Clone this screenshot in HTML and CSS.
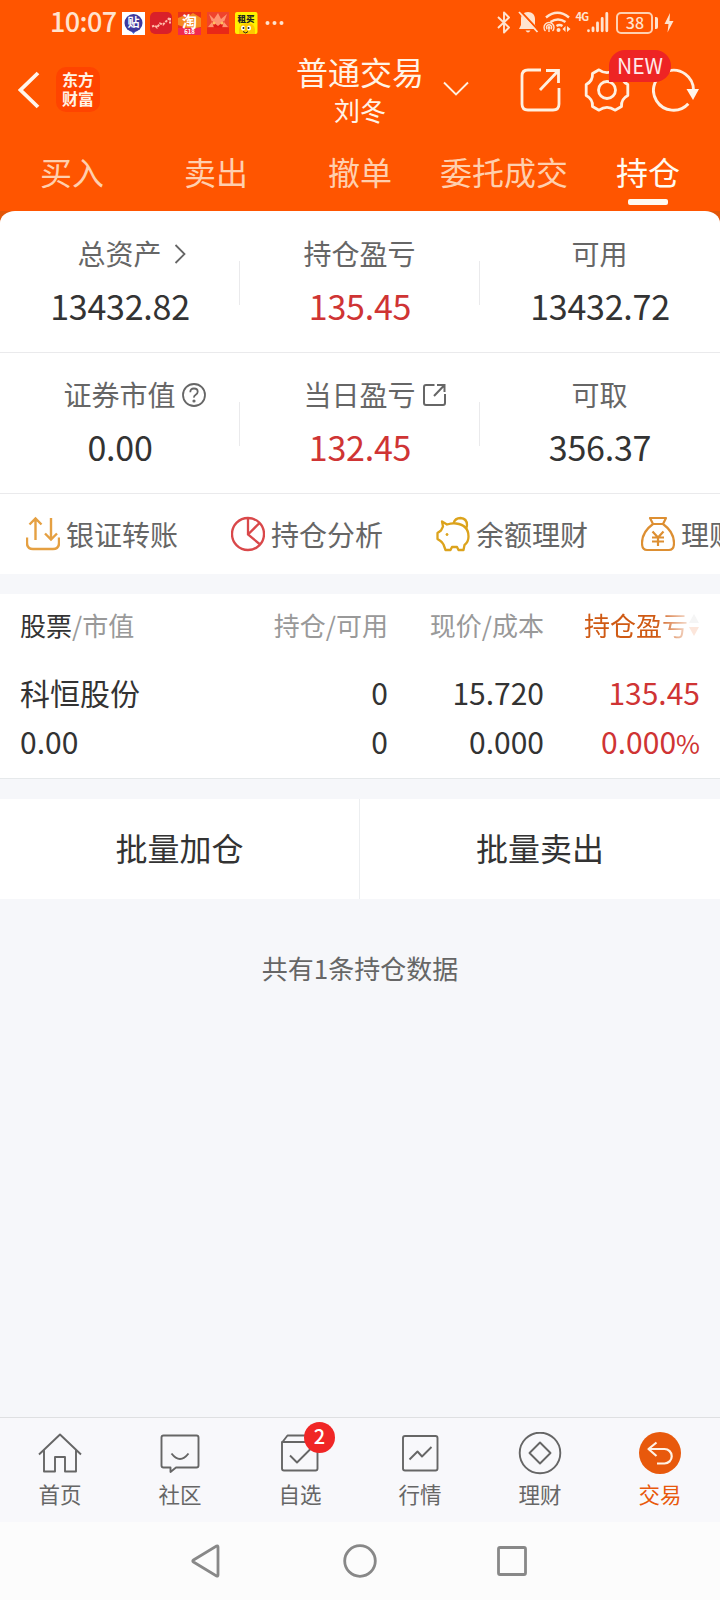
FILE: index.html
```html
<!DOCTYPE html>
<html lang="zh-CN">
<head>
<meta charset="utf-8">
<title>普通交易</title>
<link rel="stylesheet" href="styles.css">
</head>
<body>
<div class="app">
  <header class="header">
    <div class="status">
      <span class="time">10:07</span>
      <div class="notif">
        <svg width="23" height="23" viewBox="0 0 23 23"><rect width="23" height="23" fill="#fff"/><path d="M9 19l2.500 3 2.500-3z" fill="#3a62d8"/><circle cx="11.500" cy="11" r="9" fill="#3e3a9e"/><text x="11.500" y="15.300" font-size="12" font-weight="700" text-anchor="middle" fill="#fff">贴</text></svg>
        <svg width="23" height="23" viewBox="0 0 23 23"><rect width="22" height="22" rx="5" fill="#d9202a"/><path d="M2 14.500l3-1 2 2 3-4 3 1 3-3 4-4v6" fill="none" stroke="#ffb9a8" stroke-width="2" stroke-dasharray="2.500 1"/></svg>
        <svg width="23" height="23" viewBox="0 0 23 23"><rect width="23" height="23" fill="#e8321c"/><path d="M0 6l5-2 3 2 7-5 8 5v9L12 17 0 13z" fill="#f58a22"/><rect y="16" width="23" height="7" fill="#f02a50"/><text x="11.500" y="14.500" font-size="15" font-weight="700" text-anchor="middle" fill="#fff">淘</text><text x="11.500" y="21.800" font-size="6" font-weight="700" text-anchor="middle" fill="#fff">618</text></svg>
        <svg width="23" height="23" viewBox="0 0 23 23"><rect width="22" height="22" fill="#f0442c"/><path d="M2 2l5 5 4-6 3 6 6-5-3 8 4 5H1l4-5z" fill="#ff9470"/><path d="M5 9l6 5 6-5-2 7H7z" fill="#e01c18"/><circle cx="7" cy="11" r="1.500" fill="#ffc060"/><circle cx="15" cy="11" r="1.500" fill="#ffc060"/><rect y="15.500" width="22" height="6.500" fill="#e82818"/></svg>
        <svg width="23" height="23" viewBox="0 0 23 23"><rect width="22.500" height="22" rx="2" fill="#fff200"/><text x="11" y="10" font-size="8.500" font-weight="900" text-anchor="middle" fill="#222">租买</text><path d="M4 22v-5q1-6 8-6t8 6v5z" fill="#ffc800"/><ellipse cx="8" cy="16" rx="2" ry="2.500" fill="#fff"/><ellipse cx="14" cy="16" rx="2" ry="2.500" fill="#fff"/><circle cx="8.500" cy="16" r="1" fill="#222"/><circle cx="13.500" cy="16" r="1" fill="#222"/><path d="M8 19.500q3 3 5 0" stroke="#222" fill="none"/></svg>
        <svg class="more" width="19" height="23" viewBox="0 0 19 23" fill="#ffe3cf"><circle cx="2.500" cy="11" r="2"/><circle cx="9.500" cy="11" r="2"/><circle cx="16.500" cy="11" r="2"/></svg>
      </div>
      <div class="sys">
        <svg class="bt" width="14" height="23" viewBox="0 0 14 23" fill="none" stroke="#ffe3cf" stroke-width="1.900" stroke-linejoin="round"><path d="M1 6l11 10.500-5 5V1.500l5 5L1 17"/></svg>
        <svg class="bell" width="22" height="23" viewBox="0 0 22 23"><path d="M10 1c-4.500 0-7 3-7 7v6l-2 4h18l-2-4V8c0-4-2.500-7-7-7z" fill="#ffe3cf"/><path d="M7.500 19.500h5q-2.500 4-5 0z" fill="#ffe3cf"/><path d="M2.500 0L21 20" stroke="#ff5500" stroke-width="2"/><path d="M1 1l18.500 20" stroke="#ffe3cf" stroke-width="1.800"/></svg>
        <svg class="wifi" width="28" height="23" viewBox="0 0 28 23" fill="none" stroke="#ffe3cf" stroke-width="2.500"><path d="M3 6.500q11.500-9.500 23 0M7.500 11q7.500-5 15 0M13.500 15q3-1.800 6 0"/><g stroke-width="1.400"><path d="M2.500 20a5 5 0 1 1 7 0M4.300 18.300a2.600 2.600 0 1 1 3.500 0"/><circle cx="6" cy="16.500" r=".8"/><path d="M6 18v3"/></g><circle cx="15.500" cy="19" r="1" stroke-width="2"/><path d="M22.500 15l-3 3 3 3zM24 15l3.500 3-3.500 3z" fill="#ffe3cf" stroke="none"/></svg>
        <span class="net">4G</span>
        <svg class="signal" width="22" height="23" viewBox="0 0 22 23" stroke="#ffe3cf" stroke-width="2.800" stroke-linecap="round"><path d="M1.500 19.700v.1M6 17v2.800M10.500 12v7.800M15.200 7.500v12.300M19.800 2.500v17.300"/></svg>
        <span class="battery">38</span><i class="nub"></i>
        <svg class="bolt" width="10" height="20" viewBox="0 0 10 20"><path d="M6 0L.5 11H4.500L3.500 19.500 9.500 8H5.500z" fill="#ffe3cf"/></svg>
      </div>
    </div>
    <div class="titlebar">
      <div class="left">
        <svg width="22" height="38" viewBox="0 0 22 38" fill="none" stroke="#fff6ec" stroke-width="3.800"><path d="M20 2L2.500 19 20 36"/></svg>
        <div class="logo">东方<br>财富</div>
      </div>
      <div class="title"><div class="name">普通交易</div><div class="user">刘冬</div></div>
      <div class="tools">
        <svg class="chev" width="26" height="16" viewBox="0 0 26 16" fill="none" stroke="#fff0e0" stroke-width="1.900"><path d="M1 1.500l12 12 12-12"/></svg>
        <svg class="export" width="42" height="44" viewBox="0 0 42 44" fill="none" stroke="#fff0e0" stroke-width="2.800"><path d="M21 2H8Q2 2 2 8v28q0 6 6 6h25q6 0 6-6V20M26 2.500h12.500V15M38.500 2.500L20 22"/></svg>
        <div class="gearwrap">
          <svg width="46" height="46" viewBox="0 0 46 46" fill="none" stroke="#fff0e0" stroke-width="2.800" stroke-linejoin="round"><path d="M15 2.800Q23 8.500 31 2.800L37.500 6.500Q37 14 43.800 17.500v11Q37 32 37.500 39.500L31 43.200Q23 37.500 15 43.200L8.500 39.500Q9 32 2.200 28.500v-11Q9 14 8.500 6.500z"/><circle cx="23" cy="23" r="8.500"/></svg>
          <span class="new">NEW</span>
        </div>
        <svg class="refresh" width="48" height="44" viewBox="0 0 48 44"><path d="M36.300 35.700A20 20 0 1 1 41.500 22" fill="none" stroke="#fff0e0" stroke-width="2.900"/><path d="M34.500 21h12.500l-6 11z" fill="#fff6ec"/></svg>
      </div>
    </div>
    <nav class="tabs"><span>买入</span><span>卖出</span><span>撤单</span><span>委托成交</span><span class="on">持仓</span></nav>
  </header>

  <div class="cardback">
    <section class="card">
      <div class="stats first">
        <div class="cell"><div class="lab">总资产<svg class="go" width="12" height="20" viewBox="0 0 12 20" fill="none" stroke="#666" stroke-width="1.800"><path d="M1.500 1l9 9-9 9"/></svg></div><div class="num">13432.82</div></div>
        <div class="cell"><div class="lab">持仓盈亏</div><div class="num red">135.45</div></div>
        <div class="cell"><div class="lab">可用</div><div class="num">13432.72</div></div>
      </div>
      <div class="stats">
        <div class="cell"><div class="lab">证券市值<svg class="help" width="24" height="24" viewBox="0 0 24 24" fill="none" stroke="#666" stroke-width="1.800"><circle cx="12" cy="12" r="11"/><path d="M8.300 9.300q0-3.800 3.700-3.800t3.700 3.300q0 1.700-2 3T12 14.700"/><circle cx="12" cy="18" r=".7"/></svg></div><div class="num">0.00</div></div>
        <div class="cell"><div class="lab">当日盈亏<svg class="ext" width="24" height="24" viewBox="0 0 24 24" fill="none" stroke="#666" stroke-width="2"><path d="M12.500 2H4Q2 2 2 4v16q0 2 2 2h17q2 0 2-2v-9M15 2h7.500v7M22.500 2L12 13"/></svg></div><div class="num red">132.45</div></div>
        <div class="cell"><div class="lab">可取</div><div class="num">356.37</div></div>
      </div>
      <div class="actions">
        <div class="act"><svg width="34" height="36" viewBox="0 0 34 36" fill="none" stroke="#e5a042" stroke-width="2.400"><path d="M1 21.500V27q0 6 6 6h20q6 0 6-6v-5.500M9.500 24V3.500M3.500 8.500l6-6 6 6M25 2v21M19 17.500l6 6 6-6"/></svg>银证转账</div>
        <div class="act"><svg width="34" height="36" viewBox="0 0 34 36" fill="none" stroke="#d9484a" stroke-width="2.300"><circle cx="17" cy="18" r="16"/><path d="M17 2v16.500l11.500 9.500M17 18.500L28.500 7"/></svg>持仓分析</div>
        <div class="act"><svg width="34" height="36" viewBox="0 0 34 36" fill="none" stroke="#dca31c" stroke-width="2.300" stroke-linejoin="round"><path d="M6 5.500l5 3q5-1.500 9-1 12.500 1.500 12.500 13 0 5.500-4 8.500l-1 5h-5l-1.500-3h-5L14.500 34H9.500l-2-5.500q-1.500-2.500-3-3.500L1.500 23v-6l3.500-2.500 2-4z"/><path d="M17.500 7.500Q19 2 24.500 2q6.500.5 6.500 7 0 2-1 3.500"/><circle cx="11" cy="18.500" r="1" fill="#dca31c" stroke-width="1"/></svg>余额理财</div>
        <div class="act"><svg width="34" height="36" viewBox="0 0 34 36" fill="none" stroke="#dd8f32" stroke-width="2.200" stroke-linejoin="round"><path d="M9 2h16l-3 6H12zM12 8Q1 16 1 27q0 7 5 7h22q5 0 5-7Q33 16 22 8M11.500 15.500l5.500 6 5.500-6M17 21.500V30M11 21.500h12M11 25.500h12"/></svg>理财产品</div>
      </div>
    </section>
  </div>

  <section class="table">
    <div class="row head"><span><b>股票</b>/市值</span><span>持仓/可用</span><span>现价/成本</span><span class="sort">持仓盈亏<svg width="12" height="24" viewBox="0 0 12 24"><path d="M1 10L6 1l5 9z" fill="#bbb"/><path d="M1 14l5 9 5-9z" fill="#e85a10"/></svg></span></div>
    <div class="row r1"><span>科恒股份</span><span>0</span><span>15.720</span><span class="red">135.45</span></div>
    <div class="row r2"><span>0.00</span><span>0</span><span>0.000</span><span class="red">0.000<span class="pct">%</span></span></div>
  </section>

  <section class="batch"><div>批量加仓</div><div>批量卖出</div></section>
  <main class="note">共有1条持仓数据</main>

  <nav class="dock">
    <div class="item"><svg width="44" height="44" viewBox="0 0 44 44"><path d="M1 22.500L22 2.500l21 20M6 18v21.500h11V25h10v14.500h11V18"/></svg>首页</div>
    <div class="item"><svg width="44" height="44" viewBox="0 0 44 44"><path d="M5.500 3.500h33q2 0 2 2v28q0 2-2 2H18L12.500 40v-4.500h-7q-2 0-2-2v-28q0-2 2-2zM13.500 21.500q8.500 11 17 0"/></svg>社区</div>
    <div class="item"><svg width="44" height="44" viewBox="0 0 44 44"><path d="M4.500 10h33q2 0 2 2v24.500q0 2-2 2H6q-2 0-2-2V10zl5-6.500h27l4 6.500M12 23.500l7 7L32.500 17"/></svg><i class="badge">2</i>自选</div>
    <div class="item"><svg width="44" height="44" viewBox="0 0 44 44"><rect x="5" y="4" width="34.500" height="34.500" rx="2"/><path d="M11.500 27.500l8-8 4.500 5L33.500 15"/></svg>行情</div>
    <div class="item"><svg width="44" height="44" viewBox="0 0 44 44"><circle cx="22" cy="21" r="20.300"/><path d="M22 10.500L32.500 21 22 31.500 11.500 21z"/></svg>理财</div>
    <div class="item on"><svg width="44" height="44" viewBox="0 0 44 44"><circle class="disc" cx="22" cy="21" r="21"/><path class="lite" d="M19 31.500h7.500a7.200 7.200 0 0 0 0-14.500H10.500M18.500 10.500L10.500 17l8 7"/></svg>交易</div>
  </nav>
  <div class="sysnav">
    <svg width="30" height="36" viewBox="0 0 30 36"><path d="M25.500 3Q27 2.500 27 4v28q0 1.500-1.500 1L2.500 19q-1.500-1 0-2z"/></svg>
    <svg width="36" height="36" viewBox="0 0 36 36"><circle cx="18" cy="18" r="15.300"/></svg>
    <svg width="30" height="36" viewBox="0 0 30 36"><rect x="1.500" y="4.500" width="27" height="27" rx="1.500"/></svg>
  </div>
</div>
</body>
</html>
```

FILE: styles.css
```css
* { box-sizing: border-box; }
body { margin: 0; font-family: "Noto Sans CJK SC", sans-serif; color: #333; background: #f6f7fa; }
svg { display: block; flex: none; }
i { font-style: normal; }
.app { width: 720px; height: 1600px; display: flex; flex-direction: column; overflow: hidden; }
.app > * { flex: none; }
.red { color: #cf3434; }

.header { height: 211px; background: #ff5500; color: #fff3e6; }
.status { height: 44px; display: flex; align-items: flex-start; color: #ffe3cf; }
.time { width: 72px; margin-left: 50px; padding-top: 3px; font-size: 27px; font-weight: 500; line-height: 36px; letter-spacing: -0.6px; }
.notif { display: flex; gap: 5.200px; padding-top: 11.500px; }
.more { margin-left: 2px; }
.sys { display: flex; align-items: flex-start; padding-top: 11px; margin-left: 213.500px; }
.bell { margin-left: 7px; }
.wifi { margin-left: 3px; }
.net { width: 14px; margin-left: 4px; font: 700 11px/11px "Noto Sans CJK SC", sans-serif; letter-spacing: -0.8px; white-space: nowrap; }
.signal { margin-left: -2px; }
.battery { width: 37px; height: 22px; margin: 1px 0 0 7px; border: 2px solid #ffd0b0; border-radius: 5px; text-align: center; font-size: 16px; font-weight: 500; line-height: 16px; }
.nub { width: 3px; height: 12px; margin: 6px 6px 0 2px; background: #ffe3cf; border-radius: 0 2px 2px 0; }
.bolt { margin-top: 2px; }

.titlebar { height: 96px; display: grid; grid-template-columns: 296px 128px 296px; }
.left { display: flex; align-items: flex-start; padding: 27px 0 0 18px; }
.logo { width: 44px; height: 45px; margin: -4px 0 0 16px; padding-top: 3px; border-radius: 10px; background: #ff4400; text-align: center; font-size: 16px; line-height: 19px; font-weight: 700; }
.title { text-align: center; white-space: nowrap; }
.name { padding-top: 7px; font-size: 32px; line-height: 40px; }
.user { font-size: 26px; line-height: 38px; }
.tools { display: flex; align-items: flex-start; }
.chev { margin: 37px 0 0 19px; }
.export { margin: 24px 0 0 50.500px; }
.gearwrap { position: relative; margin: 22.500px 0 0 22.500px; }
.new { position: absolute; left: 25px; top: -16.500px; width: 62px; height: 32px; border-radius: 16px 16px 16px 0; background: #ee2424; color: #ffeaea; text-align: center; font-size: 21px; line-height: 31px; z-index: 1; }
.refresh { margin: 24px 0 0 22px; }

.tabs { height: 71px; display: grid; grid-template-columns: repeat(5, 144px); text-align: center; font-size: 32px; line-height: 62px; color: #ffcfae; }
.tabs .on { position: relative; color: #fffaf0; }
.tabs .on::after { content: ""; position: absolute; left: 52px; top: 59px; width: 40px; height: 6px; border-radius: 2px; background: #fffaf0; }

.cardback { background: linear-gradient(#e25608 14px, #fff 14px); }
.card { background: #fff; border-radius: 15px 15px 0 0 / 12px 12px 0 0; overflow: hidden; }
.stats { height: 141px; display: grid; grid-template-columns: repeat(3, 240px); border-bottom: 1px solid #eaeaec; padding-top: 21px; text-align: center; }
.stats.first { height: 142px; padding-top: 22px; }
.cell { background: linear-gradient(#eaeaec, #eaeaec) no-repeat 239px 28px / 1px 44px; }
.cell:last-child { background: none; }
.lab { display: flex; justify-content: center; align-items: center; margin-left: -1px; font-size: 28px; line-height: 40px; color: #666; }
.go { margin: 2px -24px 0 12px; }
.help { margin: 2px -30px 0 6px; }
.ext { margin: 2px -30px 0 6px; }
.num { margin-top: 8px; font-size: 34px; line-height: 50px; letter-spacing: -0.25px; }

.actions { height: 80px; display: flex; gap: 53px; padding: 0 0 0 26px; overflow: hidden; }
.act { flex: none; width: 152px; display: flex; align-items: center; gap: 6px; font-size: 28px; line-height: 77px; color: #666; white-space: nowrap; }

.table { margin-top: 20px; height: 185px; background: #fff; border-bottom: 1px solid #e6e9eb; padding: 5px 20px 0; }
.row { display: grid; grid-template-columns: 212px 156px 156px 156px; text-align: right; font-size: 30px; line-height: 48px; }
.row > :first-child { text-align: left; }
.pct { font-size: 26px; }
.head { font-size: 26px; line-height: 52px; color: #999; }
.head b { font-weight: 400; color: #333; }
.sort { display: flex; justify-content: flex-end; align-items: center; color: #cf5a14; -webkit-mask-image: linear-gradient(90deg, #000 112px, rgba(0,0,0,.15) 146px); mask-image: linear-gradient(90deg, #000 112px, rgba(0,0,0,.15) 146px); }
.r1 { margin-top: 17px; }
.r2 { margin-top: 1px; }

.batch { height: 100px; margin-top: 20px; background: #fff; display: grid; grid-template-columns: 1fr 1fr; text-align: center; font-size: 32px; line-height: 96px; }
.batch div:first-child { border-right: 1px solid #eceef0; }
.note { padding-top: 49px; height: 518px; text-align: center; font-size: 26px; line-height: 40px; color: #666; }

.dock { height: 105px; border-top: 1px solid #dfe0e2; background: #f8f8fb; display: grid; grid-template-columns: repeat(6, 120px); }
.item { position: relative; display: flex; flex-direction: column; align-items: center; padding-top: 14px; font-size: 21.500px; line-height: 36px; color: #666; }
.item svg { fill: none; stroke: #666; stroke-width: 1.900; stroke-linejoin: round; }
.item.on { color: #e8590c; }
.item .disc { fill: #e8590c; stroke: none; }
.item .lite { stroke: #fff3e6; stroke-width: 2.200; }
.badge { position: absolute; left: 64px; top: 4px; width: 31px; height: 31px; border-radius: 50%; background: #f02626; color: #fff; text-align: center; font-size: 20px; line-height: 28px; font-weight: 500; }

.sysnav { height: 78px; background: #fcfcfc; display: flex; align-items: flex-start; padding: 21px 0 0 191px; }
.sysnav svg { fill: none; stroke: #888; stroke-width: 2.800; }
.sysnav svg + svg { margin-left: 121px; }
.sysnav svg + svg + svg { margin-left: 119px; }
```
